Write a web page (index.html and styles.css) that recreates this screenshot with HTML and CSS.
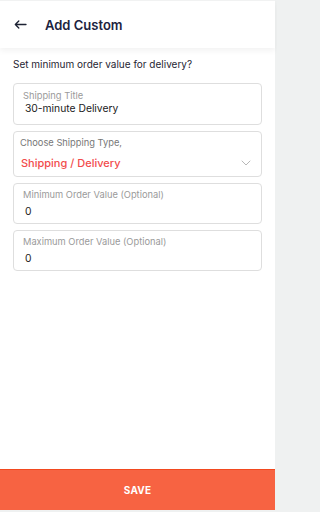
FILE: index.html
```html
<!DOCTYPE html>
<html>
<head>
<meta charset="utf-8">
<link rel="stylesheet" href="styles.css">
</head>
<body>
<div class="app">
  <header class="header">
    <svg class="back" width="13" height="9" viewBox="0 0 13 9"><path d="M12 4.5H1.3M4.8 1L1.3 4.5 4.8 8" fill="none" stroke="#1c2233" stroke-width="1.3" stroke-linecap="round" stroke-linejoin="round"/></svg>
    <h1 class="title">Add Custom</h1>
  </header>
  <main class="content">
    <p class="intro">Set minimum order value for delivery?</p>
    <div class="field first">
      <span class="label">Shipping Title</span>
      <span class="value">30-minute Delivery</span>
    </div>
    <div class="field select">
      <div class="select-text">
        <span class="label dark">Choose Shipping Type,</span>
        <span class="value red">Shipping / Delivery</span>
      </div>
      <svg class="chev" width="10" height="6" viewBox="0 0 10 6"><path d="M1 1l4 4 4-4" fill="none" stroke="#b8b8b8" stroke-width="1" stroke-linecap="round" stroke-linejoin="round"/></svg>
    </div>
    <div class="field">
      <span class="label">Minimum Order Value (Optional)</span>
      <span class="value">0</span>
    </div>
    <div class="field">
      <span class="label">Maximum Order Value (Optional)</span>
      <span class="value">0</span>
    </div>
  </main>
  <button class="save">SAVE</button>
</div>
</body>
</html>
```
FILE: styles.css
```css
html, body {
  margin: 0;
  padding: 0;
}
body {
  background: #eff1f1;
  font-family: Inter, "Noto Sans", sans-serif;
  width: 277px;
  height: 512px;
  overflow: hidden;
}
.app {
  width: 275px;
  height: 510px;
  background: #fff;
  display: flex;
  flex-direction: column;
}
.header {
  height: 47px;
  border-top: 1px solid #f1f2f2;
  display: flex;
  align-items: center;
  padding-left: 14px;
  box-shadow: 0 3px 6px rgba(0,0,0,0.05);
  flex-shrink: 0;
}
.back {
  display: block;
}
.title {
  margin: 0 0 0 18px;
  font-size: 13px;
  font-weight: 600;
  color: #1c2340;
}
.content {
  flex: 1;
  padding: 10px 13px 0 13px;
  display: flex;
  flex-direction: column;
  gap: 6px;
}
.intro {
  margin: 0 0 6px 0;
  font-size: 10px;
  line-height: 13px;
  color: #1f2533;
}
.field {
  border: 1px solid #dedede;
  border-radius: 4px;
  padding: 5px 10px 5px 9px;
  display: flex;
  flex-direction: column;
  gap: 4px;
}
.field.first {
  padding-top: 6px;
  padding-bottom: 9px;
  gap: 0;
}
.label {
  font-size: 9.3px;
  color: #9a9a9a;
  line-height: 12px;
}
.label.dark {
  color: #777;
  margin-left: -3px;
}
.value {
  font-size: 10.3px;
  color: #222;
  line-height: 13px;
  margin-left: 2px;
}
.value.red {
  color: #f24c4c;
  font-size: 11px;
  font-weight: 500;
  line-height: 14px;
  margin-left: -2px;
}
.select {
  flex-direction: row;
  align-items: flex-start;
  justify-content: space-between;
  padding-top: 5px;
  padding-bottom: 6px;
}
.select-text {
  display: flex;
  flex-direction: column;
  gap: 7px;
}
.chev {
  margin-top: 23px;
  margin-right: 0;
}
.save {
  height: 41px;
  border: none;
  border-top: 1px solid #f2491f;
  background: #f76342;
  color: #fff;
  font-family: Inter, "Noto Sans", sans-serif;
  font-weight: 700;
  font-size: 10px;
  letter-spacing: 0.2px;
  flex-shrink: 0;
  padding: 0;
}
```
